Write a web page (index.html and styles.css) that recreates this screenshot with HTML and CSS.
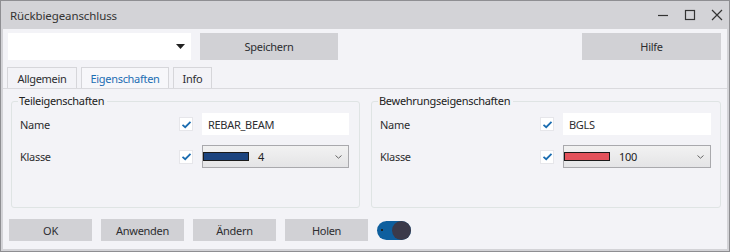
FILE: index.html
```html
<!DOCTYPE html>
<html>
<head>
<meta charset="utf-8">
<link rel="stylesheet" href="styles.css">
</head>
<body>
<div class="window">
  <div class="titlebar">
    <span class="title">Rückbiegeanschluss</span>
    <div class="controls">
      <svg class="ctl" width="12" height="12" viewBox="0 0 12 12"><path d="M1 6.5H11" stroke="#333" stroke-width="1.2"/></svg>
      <svg class="ctl" width="12" height="12" viewBox="0 0 12 12"><rect x="1.5" y="1.5" width="9" height="9" fill="none" stroke="#333" stroke-width="1.2"/></svg>
      <svg class="ctl" width="12" height="12" viewBox="0 0 12 12"><path d="M1 1L11 11M11 1L1 11" stroke="#333" stroke-width="1.2"/></svg>
    </div>
  </div>
  <div class="client">
    <div class="toolbar">
      <div class="select">
        <svg width="9" height="5" viewBox="0 0 9 5"><path d="M0 0H9L4.5 5Z" fill="#222"/></svg>
      </div>
      <div class="btn btn-save">Speichern</div>
      <div class="spacer"></div>
      <div class="btn btn-help">Hilfe</div>
    </div>
    <div class="tabs">
      <div class="tab t1">Allgemein</div>
      <div class="tab t2 active">Eigenschaften</div>
      <div class="tab t3">Info</div>
    </div>
    <div class="panel">
      <fieldset class="group g1">
        <legend>Teileigenschaften</legend>
        <div class="grid">
          <span class="lbl">Name</span>
          <span class="chk"><svg width="11" height="9" viewBox="0 0 11 9"><path d="M1.5 4.8L4.2 7.2L9.5 1.8" fill="none" stroke="#1a6cb0" stroke-width="1.8"/></svg></span>
          <div class="input">REBAR_BEAM</div>
          <span class="lbl">Klasse</span>
          <span class="chk"><svg width="11" height="9" viewBox="0 0 11 9"><path d="M1.5 4.8L4.2 7.2L9.5 1.8" fill="none" stroke="#1a6cb0" stroke-width="1.8"/></svg></span>
          <div class="combo"><span class="swatch blue"></span><span class="cval">4</span><svg class="chev" width="7" height="4" viewBox="0 0 7 4"><path d="M0.5 0.5L3.5 3.2L6.5 0.5" fill="none" stroke="#666" stroke-width="1"/></svg></div>
        </div>
      </fieldset>
      <fieldset class="group g2">
        <legend>Bewehrungseigenschaften</legend>
        <div class="grid">
          <span class="lbl">Name</span>
          <span class="chk"><svg width="11" height="9" viewBox="0 0 11 9"><path d="M1.5 4.8L4.2 7.2L9.5 1.8" fill="none" stroke="#1a6cb0" stroke-width="1.8"/></svg></span>
          <div class="input">BGLS</div>
          <span class="lbl">Klasse</span>
          <span class="chk"><svg width="11" height="9" viewBox="0 0 11 9"><path d="M1.5 4.8L4.2 7.2L9.5 1.8" fill="none" stroke="#1a6cb0" stroke-width="1.8"/></svg></span>
          <div class="combo"><span class="swatch red"></span><span class="cval">100</span><svg class="chev" width="7" height="4" viewBox="0 0 7 4"><path d="M0.5 0.5L3.5 3.2L6.5 0.5" fill="none" stroke="#666" stroke-width="1"/></svg></div>
        </div>
      </fieldset>
    </div>
    <div class="footer">
      <div class="btn fbtn">OK</div>
      <div class="btn fbtn">Anwenden</div>
      <div class="btn fbtn">Ändern</div>
      <div class="btn fbtn">Holen</div>
      <div class="toggle"><span class="dot"></span><span class="knob"></span></div>
    </div>
  </div>
</div>
</body>
</html>
```

FILE: styles.css
```css
* { box-sizing: border-box; }
html, body { margin: 0; padding: 0; }
body {
  font-family: "Noto Sans", "Liberation Sans", sans-serif;
  font-size: 11px;
  letter-spacing: -0.3px;
  color: #2d2d30;
  background: #fff;
}
.window {
  width: 730px;
  height: 252px;
  background: #d3d3d7;
  border: 1px solid #8e8e92;
  display: flex;
  flex-direction: column;
}
.titlebar {
  height: 28px;
  display: flex;
  align-items: center;
  padding-left: 9px;
}
.title { font-size: 11.5px; letter-spacing: -0.1px; color: #333; }
.controls {
  margin-left: auto;
  display: flex;
  gap: 15px;
  padding-right: 6px;
}
.ctl { display: block; }
.client {
  flex: 1;
  background: #f3f3f7;
  margin: 0 2px 2px 2px;
  display: flex;
  flex-direction: column;
}
.toolbar {
  display: flex;
  padding: 4px 6px 0 5px;
  height: 31px;
}
.select {
  width: 183px;
  height: 27px;
  background: #fff;
  display: flex;
  align-items: center;
  justify-content: flex-end;
  padding-right: 6px;
}
.select svg { display: block; }
.btn {
  background: #d1d1d5;
  display: flex;
  align-items: center;
  justify-content: center;
  color: #2d2d30;
}
.btn-save { width: 138px; height: 27px; margin-left: 9px; }
.btn-help { width: 139px; height: 27px; }
.spacer { flex: 1; }
.tabs {
  display: flex;
  gap: 4px;
  padding: 7px 0 0 4px;
  height: 29px;
  border-bottom: 1px solid #dadade;
}
.tab {
  height: 21px;
  border: 1px solid #d6d6da;
  border-bottom: none;
  display: flex;
  align-items: center;
  justify-content: center;
  background: #f3f3f7;
}
.t1 { width: 70px; }
.t2 { width: 88px; }
.t3 { width: 39px; }
.tab.active { color: #1c6db3; background: #f7f7fa; }
.panel {
  display: flex;
  gap: 11px;
  padding: 5px 0 0 8px;
  height: 124px;
}
.group {
  margin: 0;
  border: 1px solid #dfe4e4;
  border-radius: 3px;
  padding: 5px 0 0 8px;
  height: 114px;
}
.g1 { width: 349px; }
.g2 { width: 350px; }
legend {
  padding: 0 3px 0 1px;
  margin-left: -2px;
  color: #222;
  line-height: 14px;
}
.grid {
  display: grid;
  grid-template-columns: 149px 13px 147px;
  column-gap: 10px;
  row-gap: 10px;
  align-items: center;
}
.g2 .grid { grid-template-columns: 150px 13px 148px; }
.chk {
  width: 14px;
  height: 14px;
  background: #fff;
  border: 1px solid #e6e6ea;
  display: flex;
  align-items: center;
  justify-content: center;
}
.chk svg { display: block; }
.input {
  height: 22px;
  background: #fff;
  display: flex;
  align-items: center;
  padding-left: 6px;
}
.combo {
  height: 23px;
  border: 1px solid #a9a9ad;
  background: linear-gradient(#f2f2f2, #e4e4e6);
  display: flex;
  align-items: center;
}
.swatch {
  width: 46px;
  height: 9px;
  border: 1px solid #1a1a1a;
  margin-right: 9px;
}
.swatch.blue { background: #1c447f; }
.swatch.red { background: #e3525b; }
.cval { color: #222; }
.chev { margin-left: auto; margin-right: 6px; display: block; }
.footer {
  display: flex;
  align-items: center;
  gap: 9px;
  padding: 6px 0 0 6px;
}
.fbtn { width: 83px; height: 22px; }
.toggle {
  width: 34px;
  height: 19px;
  border-radius: 10px;
  background: #0e5f9e;
  display: flex;
  align-items: center;
  justify-content: space-between;
  padding-left: 4px;
}
.dot { width: 2px; height: 2px; background: #222; }
.knob {
  width: 19px;
  height: 19px;
  border-radius: 50%;
  background: #3b3a4a;
}
```
